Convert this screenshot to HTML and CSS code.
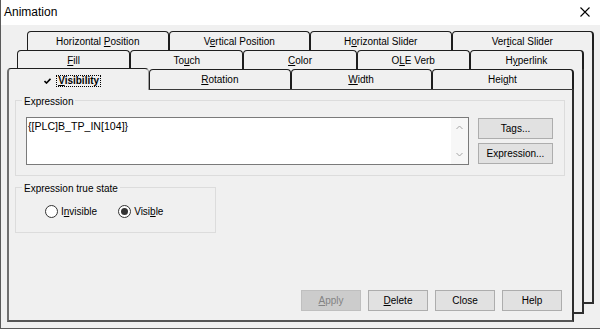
FILE: index.html
```html
<!DOCTYPE html>
<html>
<head>
<meta charset="utf-8">
<link rel="stylesheet" href="styles.css">
</head>
<body>
<div class="window">
  <div class="titlebar">
    <span class="title">Animation</span>
    <svg class="close" width="10" height="10" viewBox="0 0 10 10"><path d="M0.5 0.5L9.5 9.5M9.5 0.5L0.5 9.5" stroke="#000" stroke-width="1.1" fill="none"/></svg>
  </div>
  <div class="client">
    <div class="stack">
      <div class="sheet sheet-back1">
        <div class="tabrow">
          <div class="tab">Horizontal <u>P</u>osition</div>
          <div class="tab">V<u>e</u>rtical Position</div>
          <div class="tab">H<u>o</u>rizontal Slider</div>
          <div class="tab last">Ver<u>t</u>ical Slider</div>
        </div>
        <div class="page"></div>
      </div>
      <div class="sheet sheet-back2">
        <div class="tabrow">
          <div class="tab"><u>F</u>ill</div>
          <div class="tab">To<u>u</u>ch</div>
          <div class="tab"><u>C</u>olor</div>
          <div class="tab">O<u>L</u>E Verb</div>
          <div class="tab last">H<u>y</u>perlink</div>
        </div>
        <div class="page"></div>
      </div>
      <div class="sheet sheet-front">
        <div class="tabrow tabrow-front">
          <div class="tab tab-active">
            <svg class="check" width="7" height="6" viewBox="0 0 7 6"><path d="M0.5 3L2.5 5L6.5 0.8" stroke="#000" stroke-width="1.6" fill="none"/></svg>
            <span class="focus"><u>V</u>isibility</span>
          </div>
          <div class="tab"><u>R</u>otation</div>
          <div class="tab"><u>W</u>idth</div>
          <div class="tab last">Hei<u>g</u>ht</div>
        </div>
        <div class="page page-front">
          <div class="group group-expr">
            <div class="group-label">Expression</div>
            <div class="expr-row">
              <div class="textbox">
                <div class="textbox-text">{[PLC]B_TP_IN[104]}</div>
                <div class="vscroll">
                  <svg width="17" height="18" viewBox="0 0 17 18"><path d="M5.5 11L8.5 8L11.5 11" stroke="#a6a6a6" stroke-width="1" fill="none"/></svg>
                  <svg width="17" height="18" viewBox="0 0 17 18"><path d="M5.5 7L8.5 10L11.5 7" stroke="#a6a6a6" stroke-width="1" fill="none"/></svg>
                </div>
              </div>
              <div class="side-buttons">
                <div class="btn">Tags...</div>
                <div class="btn">Expression...</div>
              </div>
            </div>
          </div>
          <div class="group group-state">
            <div class="group-label">Expression true state</div>
            <div class="radios">
              <div class="radio"><span class="radio-circle"></span>I<u>n</u>visible</div>
              <div class="radio"><span class="radio-circle checked"></span>Visi<u>b</u>le</div>
            </div>
          </div>
          <div class="spacer"></div>
          <div class="footer">
            <div class="btn btn-foot disabled"><u>A</u>pply</div>
            <div class="btn btn-foot"><u>D</u>elete</div>
            <div class="btn btn-foot">Close</div>
            <div class="btn btn-foot">Help</div>
          </div>
        </div>
      </div>
    </div>
  </div>
</div>
</body>
</html>
```
FILE: styles.css
```css
* { box-sizing: border-box; }
html, body { margin: 0; padding: 0; }
body {
  width: 600px;
  height: 329px;
  overflow: hidden;
  background: #f0f0f0;
  font-family: "Liberation Sans", Arial, sans-serif;
  font-size: 10px;
  color: #000;
}
.window {
  width: 600px;
  height: 329px;
  border-left: 1px solid #5a5a5a;
  border-bottom: 1px solid #5a5a5a;
  display: flex;
  flex-direction: column;
  background: #f0f0f0;
}
.titlebar {
  flex: none;
  height: 25px;
  background: #fff;
  display: flex;
  align-items: center;
  justify-content: space-between;
  padding: 0 10px 0 3px;
}
.title { font-size: 12px; line-height: 25px; }
.close { display: block; margin-top: -1px; }
.client { flex: 1; }
.stack { display: grid; }
.sheet {
  grid-area: 1 / 1;
  display: flex;
  flex-direction: column;
}
.sheet-back1 { margin: 6px 0 0 26px; width: 567px; height: 273px; }
.sheet-back2 { margin: 25px 0 0 16px; width: 567px; height: 264px; }
.sheet-front { margin: 43px 0 0 6px; width: 567px; height: 254px; }

.tabrow { display: flex; height: 19px; flex: none; }
.tabrow-front { height: 21px; align-items: flex-start; }
.tab {
  flex: 1 1 0;
  min-width: 0;
  height: 19px;
  border: 1px solid #1e1e1e;
  border-bottom: 0;
  border-radius: 4px 4px 0 0;
  background: #f0f0f0;
  text-align: center;
  white-space: nowrap;
  padding-top: 3px;
  line-height: 14px;
}
.tab.last { border-right-width: 2px; }
.tabrow-front .tab { height: 20px; margin-top: 1px; }
.tabrow-front .tab-active {
  height: 22px;
  margin-top: 0;
  z-index: 1;
  border-left: 2px solid #6e6e6e;
  border-right: 1px solid #a0a0a0;
  display: flex;
  justify-content: center;
  align-items: flex-start;
  padding-top: 6px;
  font-weight: bold;
}
.check { display: block; margin: 3px 5px 0 -12px; flex: none; }
.focus {
  display: block;
  line-height: 10px;
  border: 1px dotted #000;
  padding: 0 1px;
}

.page {
  flex: 1;
  background: #f0f0f0;
  border-right: 2px solid #2e2e2e;
  border-bottom: 2px solid #2e2e2e;
}
.page-front {
  border-top: 1px solid #3a3a3a;
  border-left: 2px solid #6e6e6e;
  border-right: 2px solid #2e2e2e;
  border-bottom: 2px solid #555;
  display: flex;
  flex-direction: column;
  padding: 0 0 9px 6px;
}

.group {
  border: 1px solid #dcdcdc;
  display: flex;
  flex-direction: column;
  align-items: flex-start;
}
.group-label {
  line-height: 12px;
  margin: -5px 0 0 6px;
  padding: 0 2px;
  background: #f0f0f0;
}
.group-expr { width: 550px; margin-top: 10px; padding-bottom: 10px; }
.expr-row { display: flex; align-items: flex-start; margin-top: 9px; padding-left: 10px; }
.textbox {
  width: 443px;
  height: 48px;
  border: 1px solid #7a7a7a;
  background: #fff;
  display: flex;
}
.textbox-text {
  flex: 1;
  font-size: 10.6px;
  line-height: 12px;
  padding: 2px 0 0 1px;
}
.vscroll {
  width: 17px;
  display: flex;
  flex-direction: column;
  justify-content: space-between;
  background: #f7f7f7;
}
.vscroll svg { display: block; }
.side-buttons {
  display: flex;
  flex-direction: column;
  gap: 4px;
  margin: 1px 0 0 9px;
}
.btn {
  width: 75px;
  height: 21px;
  background: #e1e1e1;
  border: 1px solid #adadad;
  text-align: center;
  line-height: 19px;
  white-space: nowrap;
}
.group-state { width: 201px; margin-top: 11px; padding-bottom: 14px; }
.radios { display: flex; margin-top: 10px; padding-left: 29px; gap: 21px; }
.radio { display: flex; align-items: center; line-height: 13px; }
.radio-circle {
  width: 13px;
  height: 13px;
  border: 1px solid #333;
  border-radius: 50%;
  background: #fff;
  margin-right: 3px;
  display: flex;
  align-items: center;
  justify-content: center;
}
.radio-circle.checked::after {
  content: "";
  width: 7px;
  height: 7px;
  border-radius: 50%;
  background: #333;
}
.spacer { flex: 1; }
.footer { display: flex; justify-content: flex-end; gap: 7px; padding-right: 10px; }
.btn-foot { width: 60px; }
.btn.disabled { background: #cccccc; border-color: #bfbfbf; color: #838383; }
```
